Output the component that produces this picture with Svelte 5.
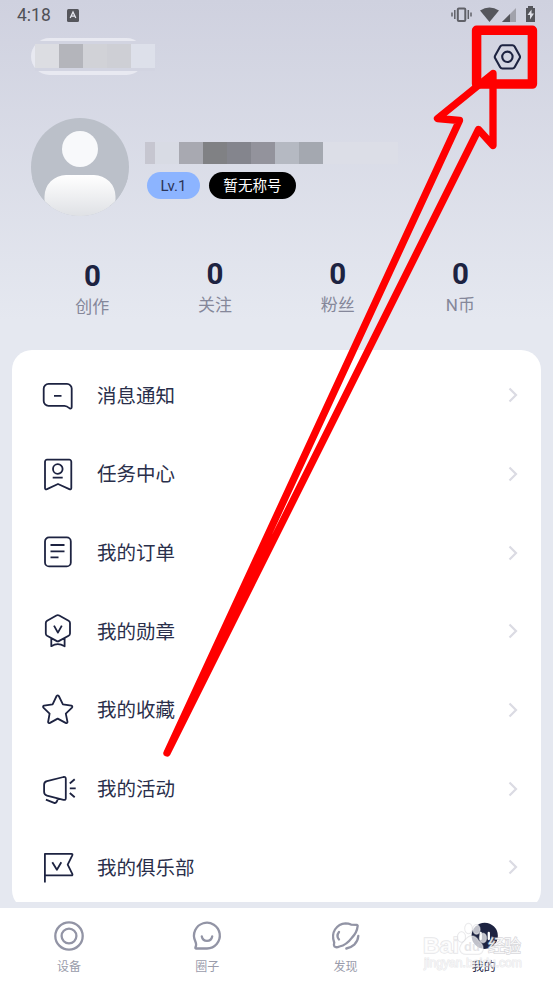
<script lang="ts">
  const maskedTitle = ['#dcdde2', '#b4b5bb', '#d1d2d7', '#cecfd5', '#dde0ea'];
  const maskedName = ['#d8dbe4', '#a8a9b1', '#808184', '#84858d', '#93939c', '#b5b9c2', '#a4a8b0'];

  const stats = [
    { value: 0, label: '创作' },
    { value: 0, label: '关注' },
    { value: 0, label: '粉丝' },
    { value: 0, label: 'N币' }
  ];

  const menu = [
    {
      label: '消息通知',
      icon: 'M8.5 6.9H27a4.7 4.7 0 0 1 4.7 4.7V30q0 2-2 1.4-3-2.6-5.2-2.6h-16a4.8 4.8 0 0 1-4.8-4.8V11.7a4.8 4.8 0 0 1 4.8-4.8zM14 18.9h7.5'
    },
    {
      label: '任务中心',
      icon: 'M7 3.7h22.3a2 2 0 0 1 2 2V32q0 2-2 1.1L18 28 7 33.1q-2 .9-2-1.1V5.7a2 2 0 0 1 2-2zM13 13a4.8 4.8 0 1 0 9.6 0 4.8 4.8 0 1 0-9.6 0M12.7 21.6h10'
    },
    {
      label: '我的订单',
      icon: 'M9 2.4h17.8a4 4 0 0 1 4 4v21a4 4 0 0 1-4 4H9a4 4 0 0 1-4-4v-21a4 4 0 0 1 4-4zM10.5 10h14M10.5 16.4h14M10.5 22.4h8'
    },
    {
      label: '我的勋章',
      icon: 'M16.4 2.5q1.4-.8 2.8 0l9.4 5.2q1.4.8 1.4 2.4v10.3q0 1.6-1.4 2.4l-9.4 5.1q-1.4.8-2.8 0L7.1 22.8q-1.3-.8-1.3-2.4V10.1q0-1.6 1.3-2.4zM14 12.6l3.9 7 3.9-7M11.3 25.5v7.7q3.3-2 6.5-2t6.8 2v-7.7'
    },
    {
      label: '我的收藏',
      icon: 'M16.6 4q1.1-1.3 2.2 0l4.1 8.4 8.5 1.3q1.5.6.6 1.9l-6.2 6 1.7 8.4q-.3 1.5-1.9.9l-7.9-4.3-7.7 4.3q-1.6.6-1.9-.9l1.5-8.4-6.2-6q-.9-1.3.6-1.9l8.6-1.3z'
    },
    {
      label: '我的活动',
      icon: 'M7 10.2L23.5 6q2.3-.4 2.3 1.7v19.6q0 2.1-2.3 1.5L7 24.6q-2.9-.7-2.9-3.5v-7.4q0-2.8 2.9-3.5zM5.900 28.600l8.200 3.300q1.700.5 2.600-1.100l1.300-3.100M29.800 12.500l4.900-4.300M29.800 17.300h5.900M29.800 22l4.900 4.300'
    },
    {
      label: '我的俱乐部',
      icon: 'M4.900 33.500V4.800h26.500q1.500.2.900 1.600l-4.600 9.200 4.600 9.200q.6 1.500-.9 1.600H5M12.300 13.200l4.600 7.500 4.400-7.500'
    }
  ];

  const tabs = ['设备', '圈子', '发现', '我的'];
</script>

<div class="screen">
  <header class="status">
    <span class="time">4:18</span>
    <svg class="input-mode" width="12" height="13" viewBox="0 0 12 13">
      <rect width="12" height="13" rx="1.5" fill="#55565c" />
      <path d="M3.200 9L6 3l2.800 6M4.200 7.200h3.600" fill="none" stroke="#e5e6ee" stroke-width="1.300" />
    </svg>
    <svg class="indicators" width="86" height="18" viewBox="450 6 86 18">
      <rect x="457.800" y="8.500" width="7.500" height="12.500" rx="1" fill="none" stroke="#606168" stroke-width="2" />
      <path d="M454.800 10v9M452 12.500v4M468.300 10v9M471 12.500v4" stroke="#606168" stroke-width="1.500" />
      <path d="M480 10.500q9.500-6 19 0L489.500 22z" fill="#55565c" />
      <path d="M516 8v14h-14z" fill="#a1a2ab" />
      <path d="M510 14v8h-8z" fill="#55565c" />
      <path d="M528 6h5v2h2v14h-9V8h2z" fill="#55565c" />
      <path d="M531.500 9.500l-4 5.500h2.500v4.500l4-6h-2.500z" fill="#dfe0e8" />
    </svg>
  </header>

  <div class="toolbar">
    <div class="title-pill">
      <div class="pill-blocks">
        {#each maskedTitle as color}
          <i style="background: {color}"></i>
        {/each}
      </div>
    </div>
    <svg class="settings" width="28" height="28" viewBox="0 0 28 28">
      <path d="M9.400 2.300h10q1.500 0 2.200 1.200l5 9q.8 1.400 0 2.800l-5 9q-.7 1.200-2.200 1.200h-10q-1.500 0-2.200-1.200l-5-9q-.8-1.400 0-2.800l5-9q.7-1.200 2.200-1.200z" />
      <circle cx="14.400" cy="13.800" r="5.200" />
    </svg>
  </div>

  <section class="profile">
    <svg width="98" height="98" viewBox="0 0 98 98">
      <defs>
        <clipPath id="avatar"><circle cx="49" cy="49" r="49" /></clipPath>
        <linearGradient id="body" x2="0" y2="1">
          <stop stop-color="#fff" />
          <stop offset="1" stop-color="#dfe1e5" />
        </linearGradient>
      </defs>
      <g clip-path="url(#avatar)">
        <rect width="98" height="98" fill="#bbc0c9" />
        <rect y="88" width="98" height="10" fill="#dfe1e8" />
        <path d="M0 60h98L84 88H14z" fill="#bbc0c9" />
        <circle cx="49" cy="31" r="18" fill="#f8f9fb" />
        <path d="M35 57h28a21.500 21.500 0 0 1 21.500 21.500V84Q69 98 49 98T13.500 84v-5.500A21.500 21.500 0 0 1 35 57z" fill="url(#body)" />
      </g>
    </svg>
    <div class="identity">
      <div class="name-blocks">
        <i class="first"></i>
        {#each maskedName as color}
          <i style="background: {color}"></i>
        {/each}
        <i class="last"></i>
      </div>
      <div class="badges">
        <span class="badge level">Lv.1</span>
        <span class="badge honor">暂无称号</span>
      </div>
    </div>
  </section>

  <section class="stats">
    {#each stats as stat}
      <div class="stat">
        <strong>{stat.value}</strong>
        <span>{stat.label}</span>
      </div>
    {/each}
  </section>

  <main class="content">
    <ul class="card">
      {#each menu as item}
        <li>
          <svg class="menu-icon" width="36" height="36" viewBox="0 0 36 36"><path d={item.icon} /></svg>
          <span>{item.label}</span>
          <svg class="chevron" width="10" height="16" viewBox="0 0 10 16"><path d="M1.500 1.500L8 8l-6.500 6.500" /></svg>
        </li>
      {/each}
    </ul>
  </main>

  <nav>
    {#each tabs as tab, i}
      <div class="tab" class:active={i === 3}>
        <svg width="32" height="32" viewBox="0 0 32 32">
          {#if i === 0}
            <circle cx="16" cy="16" r="13.700" />
            <circle cx="16" cy="16" r="7.400" />
          {:else if i === 1}
            <path d="M5 28.500H16a12.900 12.900 0 1 0-11.800-7.500q.7 1.700.9 3.200.1 1.800-.6 3-.5 1.200.5 1.300zM10.800 16.500a5.300 5.300 0 0 0 10.400 0" />
          {:else if i === 2}
            <path d="M4.500 26.500q-1-1.500-.3-4Q1.500 15 5 9.500 9 3.500 15.500 3.300q3 0 5.500 1.300l5.800.3q1.200.3.800 1.500-.6 6-5.600 11.200Q16.500 25 9.500 26.500q-3.500 1.500-5 0zM9 12q-3 4 0 7.500M28.300 16q-.3 5-4 8.600-3.300 3-8 3.900" />
          {:else}
            <circle cx="16.700" cy="15.800" r="14.300" fill="#1d2341" />
            <path d="M12.700 13v6M20.800 13v6" />
          {/if}
        </svg>
        <span>{tab}</span>
      </div>
    {/each}
  </nav>

  <!-- hand-drawn pointer to the settings button -->
  <svg class="overlay" width="553" height="983" viewBox="0 0 553 983">
    <g fill="none" stroke="#f00" stroke-linejoin="round">
      <rect x="476.600" y="30.300" width="55.800" height="53.800" stroke-width="9.500" />
      <path d="M493 73.500L437.500 118.500 459.500 120.500 167 753 478.500 129.500 493 145.500z" stroke-width="7.300" />
    </g>
    <g class="watermark">
      <text x="423" y="953" font-size="22" textLength="36" lengthAdjust="spacingAndGlyphs">Bai</text>
      <ellipse cx="461.500" cy="937" rx="3.800" ry="5" />
      <ellipse cx="468.500" cy="928.500" rx="3.500" ry="5" />
      <ellipse cx="476.500" cy="929.500" rx="3.600" ry="4.800" />
      <ellipse cx="483" cy="938" rx="3.600" ry="4.800" />
      <path d="M472 936q4 0 6.500 4.500 5.500 4.500 4.500 9-1 5-6 4.500h-10q-6 .5-7-4.500-.5-4 5-9 3-4.500 7-4.500z" />
      <text class="du" x="464" y="951" font-size="13">du</text>
      <text class="jy" x="488" y="952" font-size="17" textLength="33">经验</text>
      <text class="url" x="424" y="967" font-size="12" textLength="98" lengthAdjust="spacingAndGlyphs">jingyan.baidu.com</text>
    </g>
  </svg>
</div>

<style>
  :global(body) {
    margin: 0;
  }
  .screen {
    position: relative;
    display: flex;
    flex-direction: column;
    width: 553px;
    height: 983px;
    overflow: hidden;
    background: linear-gradient(#cfd1df, #e5e8f0 320px);
    color: #1d2341;
    font-family: Roboto, 'Noto Sans CJK SC', sans-serif;
  }
  svg {
    display: block;
    flex: none;
  }

  .status {
    display: flex;
    align-items: center;
    height: 30px;
    padding: 0 17px;
    box-sizing: border-box;
    color: #505157;
  }
  .time {
    width: 50px;
    font-size: 17.5px;
  }
  .indicators {
    margin-left: auto;
  }

  .toolbar {
    display: flex;
    align-items: center;
    justify-content: space-between;
    height: 53px;
    padding: 0 32px 0 31px;
  }
  .title-pill {
    width: 114px;
    height: 37px;
    border-radius: 19px;
    background: #e8e9f1;
  }
  .pill-blocks {
    display: flex;
    width: 120px;
    margin: 3px 0 0 4px;
    border: solid #d2d4e1;
    border-width: 3px 0;
  }
  .pill-blocks i,
  .name-blocks i {
    width: 24px;
    height: 24px;
  }
  .settings {
    fill: none;
    stroke: #1d2341;
    stroke-width: 2.1;
  }

  .profile {
    display: flex;
    height: 98px;
    padding: 35px 31px 0;
  }
  .identity {
    padding: 24px 0 0 16px;
  }
  .name-blocks {
    display: flex;
  }
  .name-blocks i {
    height: 22px;
  }
  .name-blocks .first {
    width: 10px;
    background: #c6c6d0;
  }
  .name-blocks .last {
    width: 75px;
    background: #dcdee7;
  }
  .badges {
    display: flex;
    gap: 9px;
    margin: 8px 0 0 2px;
  }
  .badge {
    height: 27px;
    border-radius: 14px;
    font-size: 15px;
    line-height: 29px;
    text-align: center;
  }
  .level {
    width: 53px;
    background: #8cb4ff;
    color: #2c3557;
  }
  .honor {
    width: 87px;
    background: #000;
    color: #fff;
    font-size: 14.6px;
  }

  .stats {
    display: flex;
    height: 92px;
    padding: 42px 31px 0;
  }
  .stat {
    display: flex;
    flex-direction: column;
    align-items: center;
    width: 122.7px;
  }
  .stat:first-child {
    padding-top: 1.5px;
  }
  .stat strong {
    font-size: 29.5px;
    line-height: 32px;
  }
  .stat span {
    color: #85879a;
    font-size: 17px;
    line-height: 24px;
    margin-top: 3px;
  }

  .content {
    height: 552px;
    margin: 0 12px;
    overflow: hidden;
  }
  .card {
    height: 560px;
    margin: 0;
    padding: 6px 0 0;
    box-sizing: border-box;
    border-radius: 20px;
    background: #fff;
    list-style: none;
  }
  .card li {
    display: flex;
    align-items: center;
    height: 78.67px;
    padding: 0 23px 0 28px;
    font-size: 19.5px;
  }
  .card li span {
    padding-bottom: 2px;
    color: #2a2f4b;
  }
  .menu-icon {
    margin-right: 21px;
    fill: none;
    stroke: #1d2341;
    stroke-width: 1.8;
    stroke-linejoin: round;
  }
  .chevron {
    margin-left: auto;
    fill: none;
    stroke: #dbdbe3;
    stroke-width: 2.2;
  }

  nav {
    display: flex;
    height: 75px;
    margin-top: 6px;
    background: #fff;
  }
  .tab {
    display: flex;
    flex: 1;
    flex-direction: column;
    align-items: center;
    padding-top: 12px;
    color: #9a9cab;
    font-size: 12px;
  }
  .tab svg {
    fill: none;
    stroke: #9294a5;
    stroke-width: 2.3;
    stroke-linecap: round;
  }
  .tab span {
    margin-top: 6px;
    line-height: 18px;
  }
  .tab.active {
    color: #1d2341;
  }
  .tab.active svg {
    stroke: #fff;
  }

  .overlay {
    position: absolute;
    inset: 0;
    pointer-events: none;
  }
  .watermark {
    fill: rgba(255, 255, 255, 0.72);
    stroke: rgba(205, 205, 210, 0.5);
    stroke-width: 1.4;
    paint-order: stroke;
    font-family: 'Liberation Sans', 'Noto Sans CJK SC', sans-serif;
    font-weight: bold;
  }
  .watermark .du {
    fill: rgba(205, 205, 210, 0.5);
    stroke: none;
  }
  .watermark .jy {
    fill: rgba(255, 255, 255, 0.85);
    stroke: rgba(190, 190, 196, 0.6);
    font-weight: normal;
  }
  .watermark .url {
    fill: rgba(255, 255, 255, 0.55);
    stroke: rgba(205, 205, 210, 0.45);
    stroke-width: 1;
    font-weight: normal;
  }
</style>
